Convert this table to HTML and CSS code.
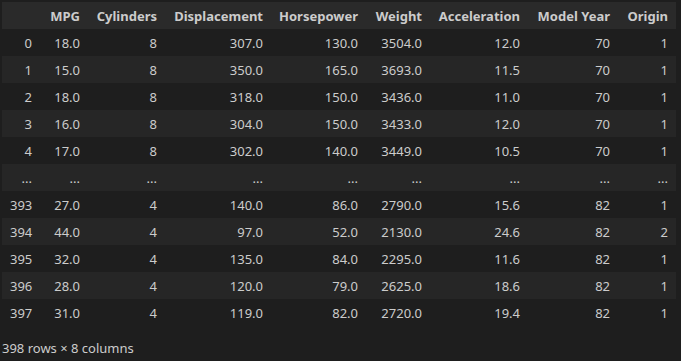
FILE: index.html
```html
<!DOCTYPE html>
<html lang="en">
<head>
  <meta charset="UTF-8">
  <title>DataFrame</title>
  <link rel="stylesheet" href="styles.css">
</head>
<body>
  <div class="output">
    <table class="dataframe">
      <colgroup>
        <col class="c-idx">
        <col class="c-mpg">
        <col class="c-cyl">
        <col class="c-disp">
        <col class="c-hp">
        <col class="c-wt">
        <col class="c-acc">
        <col class="c-year">
        <col class="c-orig">
      </colgroup>
      <thead>
        <tr>
          <th></th>
          <th>MPG</th>
          <th>Cylinders</th>
          <th>Displacement</th>
          <th>Horsepower</th>
          <th>Weight</th>
          <th>Acceleration</th>
          <th>Model Year</th>
          <th>Origin</th>
        </tr>
      </thead>
      <tbody>
        <tr><td class="idx">0</td><td>18.0</td><td>8</td><td>307.0</td><td>130.0</td><td>3504.0</td><td>12.0</td><td>70</td><td>1</td></tr>
        <tr><td class="idx">1</td><td>15.0</td><td>8</td><td>350.0</td><td>165.0</td><td>3693.0</td><td>11.5</td><td>70</td><td>1</td></tr>
        <tr><td class="idx">2</td><td>18.0</td><td>8</td><td>318.0</td><td>150.0</td><td>3436.0</td><td>11.0</td><td>70</td><td>1</td></tr>
        <tr><td class="idx">3</td><td>16.0</td><td>8</td><td>304.0</td><td>150.0</td><td>3433.0</td><td>12.0</td><td>70</td><td>1</td></tr>
        <tr><td class="idx">4</td><td>17.0</td><td>8</td><td>302.0</td><td>140.0</td><td>3449.0</td><td>10.5</td><td>70</td><td>1</td></tr>
        <tr><td class="idx">...</td><td>...</td><td>...</td><td>...</td><td>...</td><td>...</td><td>...</td><td>...</td><td>...</td></tr>
        <tr><td class="idx">393</td><td>27.0</td><td>4</td><td>140.0</td><td>86.0</td><td>2790.0</td><td>15.6</td><td>82</td><td>1</td></tr>
        <tr><td class="idx">394</td><td>44.0</td><td>4</td><td>97.0</td><td>52.0</td><td>2130.0</td><td>24.6</td><td>82</td><td>2</td></tr>
        <tr><td class="idx">395</td><td>32.0</td><td>4</td><td>135.0</td><td>84.0</td><td>2295.0</td><td>11.6</td><td>82</td><td>1</td></tr>
        <tr><td class="idx">396</td><td>28.0</td><td>4</td><td>120.0</td><td>79.0</td><td>2625.0</td><td>18.6</td><td>82</td><td>1</td></tr>
        <tr><td class="idx">397</td><td>31.0</td><td>4</td><td>119.0</td><td>82.0</td><td>2720.0</td><td>19.4</td><td>82</td><td>1</td></tr>
      </tbody>
    </table>
    <p class="shape">398 rows × 8 columns</p>
  </div>
</body>
</html>
```

FILE: styles.css
```css
body {
  margin: 0;
  background-color: #1e1e1e;
  color: #cccccc;
  font-family: "Noto Sans", "Open Sans", sans-serif;
  font-size: 13px;
}

.output {
  padding: 2px;
}

/* table of the dataframe */
.dataframe {
  border-collapse: collapse;
  table-layout: fixed;
  width: 674px;
}

.dataframe th,
.dataframe td {
  height: 27px;
  padding: 0 8px;
  text-align: right;
  white-space: nowrap;
  vertical-align: middle;
}

.dataframe thead tr {
  background-color: #2a2a2a;
}

.dataframe th {
  font-weight: bold;
}

.dataframe tbody tr:nth-child(even) {
  background-color: #262626;
}

/* column widths */
.c-idx { width: 38px; }
.c-mpg { width: 48px; }
.c-cyl { width: 77px; }
.c-disp { width: 106px; }
.c-hp { width: 95px; }
.c-wt { width: 64px; }
.c-acc { width: 98px; }
.c-year { width: 90px; }
.c-orig { width: 58px; }

.shape {
  margin: 13px 0 0 0;
  line-height: 18px;
}
```
